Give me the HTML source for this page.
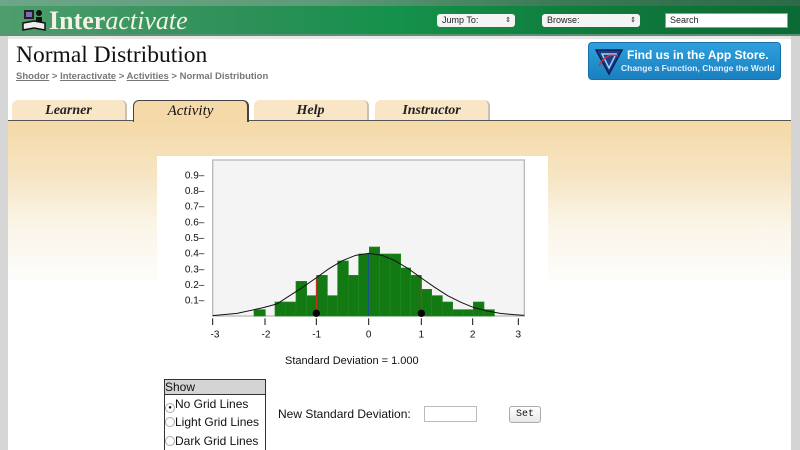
<!DOCTYPE html>
<html><head><style>
*{margin:0;padding:0;box-sizing:border-box}
body{width:800px;height:450px;overflow:hidden;background:#fff;font-family:"Liberation Sans",sans-serif;position:relative}
.abs{position:absolute}
.tab{position:absolute;top:100px;width:115px;height:20px;background:#f8e6c6;border-radius:6px 6px 0 0;border-right:2px solid #c8c0b0;font-family:'Liberation Serif',serif;font-style:italic;font-weight:bold;font-size:14px;text-align:center;line-height:22px;color:#222}
</style></head><body>
<div class="abs" style="left:0;top:0;width:8px;height:450px;background:#d6d6d6"></div>
<div class="abs" style="left:791px;top:0;width:9px;height:450px;background:#d4d4d4"></div>
<div class="abs" style="left:0;top:0;width:800px;height:36px;background:linear-gradient(90deg,#4e9e6c 0%,#2e9058 30%,#14914a 50%,#0f7a3c 75%,#0c6a34 100%)"></div>
<div class="abs" style="left:0;top:0;width:800px;height:6px;background:linear-gradient(90deg,#6da688,#5e9b78 40%,#3b7a55 70%,#2d6a48)"></div>
<div class="abs" style="left:0;top:34px;width:800px;height:2px;background:#5f8f75"></div>
<div class="abs" style="left:8px;top:36px;width:783px;height:3px;background:#e8e8e8"></div>
<svg class="abs" style="left:22px;top:9px" width="24" height="22" viewBox="0 0 24 22"><rect x="2" y="1" width="10" height="9" fill="#222"/><rect x="4" y="3" width="6" height="5" fill="#7a6fb0"/><circle cx="17" cy="4" r="3" fill="#111"/><rect x="14" y="8" width="6" height="8" fill="#111"/><path d="M1 14 L12 12 L23 14 L23 21 L12 19 L1 21Z" fill="#eee" stroke="#111" stroke-width="1.5"/></svg>
<div class="abs" style="left:49px;top:7px;font-family:'Liberation Serif',serif;font-size:26px;color:#f2f2e6;line-height:28px"><b>Inter</b><i>activate</i></div>
<div class="abs" style="left:437px;top:14px;width:78px;height:13px;background:#f4f4f4;border-radius:3px;font-size:9px;line-height:13px;padding-left:5px;color:#222">Jump To:<span style="position:absolute;right:4px;font-size:7px">⇕</span></div>
<div class="abs" style="left:542px;top:14px;width:98px;height:13px;background:#f4f4f4;border-radius:3px;font-size:9px;line-height:13px;padding-left:5px;color:#222">Browse:<span style="position:absolute;right:4px;font-size:7px">⇕</span></div>
<div class="abs" style="left:665px;top:13px;width:123px;height:15px;background:#fff;border:1px solid #999;font-size:9px;line-height:13px;padding-left:4px;color:#222">Search</div>
<div class="abs" style="left:16px;top:42px;font-family:'Liberation Serif',serif;font-size:23.5px;color:#111">Normal Distribution</div>
<div class="abs" style="left:16px;top:71px;font-size:9.5px;font-weight:bold;color:#777"><u>Shodor</u> &gt; <u>Interactivate</u> &gt; <u>Activities</u> &gt; Normal Distribution</div>
<div class="abs" style="left:588px;top:42px;width:193px;height:38px;border-radius:4px;background:linear-gradient(#2fa0dd,#1a80c0);border:1px solid #1670aa"></div>
<svg class="abs" style="left:594px;top:46px" width="30" height="30" viewBox="0 0 30 30"><path d="M2 4 L28 4 L15 28Z" fill="#1b3f8a" stroke="#0d2050" stroke-width="1.5"/><path d="M8 8 L22 8 L15 22Z" fill="none" stroke="#9fd0ff" stroke-width="1.5"/><path d="M5 20 Q12 6 24 10" fill="none" stroke="#d03030" stroke-width="1.5"/></svg>
<div class="abs" style="left:627px;top:48px;font-size:12px;font-weight:bold;color:#fff;line-height:14px">Find us in the App Store.</div>
<div class="abs" style="left:621px;top:63px;font-size:8.5px;font-weight:bold;color:#dff0ff;line-height:11px">Change a Function, Change the World</div>
<div class="abs" style="left:8px;top:120px;width:783px;height:2px;background:#555"></div>
<div class="abs" style="left:8px;top:121px;width:783px;height:160px;background:linear-gradient(#f5d9a8,#f6e5c4 35%,#fbf5e8 65%,#fdfdfb)"></div>
<div class="tab" style="left:12px">Learner</div>
<div class="abs" style="left:133px;top:100px;width:116px;height:22px;background:#f5d9a8;border-radius:6px 6px 0 0;border:1px solid #444;border-bottom:none;border-right:2px solid #444;font-family:'Liberation Serif',serif;font-style:italic;font-size:15px;text-align:center;line-height:20px;color:#111">Activity</div>
<div class="tab" style="left:254px">Help</div>
<div class="tab" style="left:375px">Instructor</div>
<div class="abs" style="left:157px;top:156px;width:391px;height:294px;background:#fff"></div>
<svg class="abs" style="left:160px;top:155px" width="390" height="190" viewBox="0 0 1170 570" font-family="Liberation Sans" font-size="30">
<rect x="158" y="15" width="935" height="468" fill="#f4f4f4" stroke="#bbb" stroke-width="4"/>
<g fill="#137a13" stroke="#1e8a1e" stroke-width="2">
<rect x="282" y="464" width="34" height="19"/>
<rect x="345" y="441" width="31" height="42"/><rect x="376" y="441" width="32" height="42"/>
<rect x="408" y="379" width="32" height="104"/><rect x="440" y="422" width="30" height="61"/>
<rect x="470" y="361" width="32" height="122"/><rect x="502" y="422" width="31" height="61"/>
<rect x="533" y="318" width="32" height="165"/><rect x="565" y="361" width="31" height="122"/>
<rect x="596" y="297" width="32" height="186"/><rect x="628" y="276" width="31" height="207"/>
<rect x="659" y="297" width="31" height="186"/><rect x="690" y="297" width="32" height="186"/>
<rect x="722" y="339" width="30" height="144"/><rect x="752" y="361" width="32" height="122"/>
<rect x="784" y="403" width="31" height="80"/><rect x="815" y="422" width="32" height="61"/>
<rect x="847" y="441" width="31" height="42"/><rect x="878" y="464" width="31" height="19"/>
<rect x="909" y="464" width="31" height="19"/><rect x="940" y="441" width="32" height="42"/>
<rect x="972" y="464" width="31" height="19"/>
</g>
<line x1="626" y1="297" x2="626" y2="483" stroke="#1a4aa0" stroke-width="3"/>
<line x1="469" y1="369" x2="469" y2="475" stroke="#e02020" stroke-width="3"/>
<line x1="784" y1="369" x2="784" y2="475" stroke="#e02020" stroke-width="3"/>
<polyline fill="none" stroke="#111" stroke-width="3" points="158,482 231,475 310,458 350,447 389,422 428,397 468,369 507,341 547,317 587,301 626,295 666,301 705,317 745,341 784,369 824,397 863,422 903,442 942,458 982,468 1021,475 1061,479 1093,481"/>
<circle cx="469" cy="475" r="11" fill="#000"/><circle cx="784" cy="475" r="11" fill="#000"/>
<g fill="#111" text-anchor="end">
<text x="133" y="70">0.9–</text><text x="133" y="117">0.8–</text><text x="133" y="164">0.7–</text><text x="133" y="211">0.6–</text><text x="133" y="258">0.5–</text><text x="133" y="305">0.4–</text><text x="133" y="352">0.3–</text><text x="133" y="399">0.2–</text><text x="133" y="446">0.1–</text>
</g>
<g stroke="#111" stroke-width="3"><line x1="158" y1="490" x2="158" y2="510"/><line x1="315" y1="490" x2="315" y2="510"/><line x1="469" y1="490" x2="469" y2="510"/><line x1="626" y1="490" x2="626" y2="510"/><line x1="784" y1="490" x2="784" y2="510"/><line x1="938" y1="490" x2="938" y2="510"/><line x1="1075" y1="490" x2="1075" y2="510"/></g>
<g fill="#111" text-anchor="middle"><text x="165" y="548">-3</text><text x="318" y="548">-2</text><text x="470" y="548">-1</text><text x="626" y="548">0</text><text x="784" y="548">1</text><text x="938" y="548">2</text><text x="1075" y="548">3</text></g>
</svg>
<div class="abs" style="left:285px;top:355px;font-size:11px;color:#111">Standard Deviation = 1.000</div>
<div class="abs" style="left:164px;top:379px;width:102px;height:71px;border:1px solid #333;border-bottom:none;font-size:12px;color:#111">
<div style="background:#d4d4d4;border-bottom:1px solid #333;height:15px;line-height:14px">Show</div>
<div style="line-height:18px;height:18px"><span style="display:inline-block;width:10px;height:10px;border:1px solid #aaa;border-radius:50%;vertical-align:-1px;text-align:center;font-size:6px;line-height:9px">●</span>No Grid Lines</div>
<div style="line-height:19px;height:19px"><span style="display:inline-block;width:10px;height:10px;border:1px solid #aaa;border-radius:50%;vertical-align:-1px"></span>Light Grid Lines</div>
<div style="line-height:18px"><span style="display:inline-block;width:10px;height:10px;border:1px solid #aaa;border-radius:50%;vertical-align:-1px"></span>Dark Grid Lines</div>
</div>
<div class="abs" style="left:278px;top:407px;font-size:12px;color:#111">New Standard Deviation:</div>
<div class="abs" style="left:424px;top:406px;width:53px;height:16px;border:1px solid #bbb;background:#fff"></div>
<div class="abs" style="left:509px;top:406px;width:32px;height:17px;border:1px solid #aaa;border-radius:3px;background:linear-gradient(#fff,#e8e8e8);font-family:'Liberation Mono',monospace;font-size:10px;text-align:center;line-height:15px;color:#111">Set</div>
</body></html>
